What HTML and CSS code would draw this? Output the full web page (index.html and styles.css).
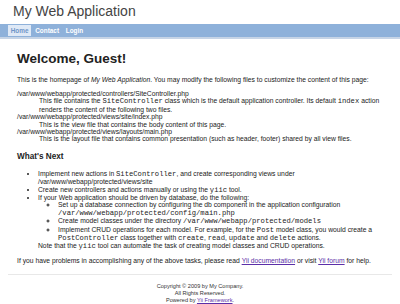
FILE: index.html
```html
<!DOCTYPE html>
<html lang="en">
<head>
    <meta charset="UTF-8">
    <title>My Web Application</title>
    <link rel="stylesheet" href="styles.css">
</head>
<body>
    <div class="page">
        <div class="header">
            <div class="logo">My Web Application</div>
        </div>
        <div class="mainmenu">
            <ul>
                <li class="active"><a href="#">Home</a></li>
                <li><a href="#">Contact</a></li>
                <li><a href="#">Login</a></li>
            </ul>
        </div>
        <div class="content">
            <h1>Welcome, Guest!</h1>
            <p>This is the homepage of <em>My Web Application</em>. You may modify the following files to customize the content of this page:</p>
            <dl>
                <dt>/var/www/webapp/protected/controllers/SiteController.php</dt>
                <dd>This file contains the <code>SiteController</code> class which is the default application controller. Its default <code>index</code> action renders the content of the following two files.</dd>
                <dt>/var/www/webapp/protected/views/site/index.php</dt>
                <dd>This is the view file that contains the body content of this page.</dd>
                <dt>/var/www/webapp/protected/views/layouts/main.php</dt>
                <dd>This is the layout file that contains common presentation (such as header, footer) shared by all view files.</dd>
            </dl>
            <h2>What's Next</h2>
            <ul class="next">
                <li>Implement new actions in <code>SiteController</code>, and create corresponding views under /var/www/webapp/protected/views/site</li>
                <li>Create new controllers and actions manually or using the <code>yiic</code> tool.</li>
                <li>If your Web application should be driven by database, do the following:
                    <ul>
                        <li>Set up a database connection by configuring the db component in the application configuration <code>/var/www/webapp/protected/config/main.php</code></li>
                        <li>Create model classes under the directory <code>/var/www/webapp/protected/models</code></li>
                        <li>Implement CRUD operations for each model. For example, for the <code>Post</code> model class, you would create a <code>PostController</code> class together with <code>create</code>, <code>read</code>, <code>update</code> and <code>delete</code> actions.</li>
                    </ul>
                    Note that the <code>yiic</code> tool can automate the task of creating model classes and CRUD operations.
                </li>
            </ul>
            <p class="help">If you have problems in accomplishing any of the above tasks, please read <a href="#">Yii documentation</a> or visit <a href="#">Yii forum</a> for help.</p>
        </div>
        <div class="footer">
            Copyright &copy; 2009 by My Company.<br>
            All Rights Reserved.<br>
            Powered by <a href="#">Yii Framework</a>.
        </div>
    </div>
</body>
</html>
```

FILE: styles.css
```css
body {
    margin: 0;
    font-family: "Liberation Sans", Arial, sans-serif;
    color: #222;
    background: #fff;
}
.header {
    height: 24px;
    box-sizing: border-box;
    padding: 2.6px 0 0 13px;
}
.logo {
    font-size: 14px;
    line-height: 16px;
    color: #444;
}
.mainmenu {
    background: #8eb1da;
    border-bottom: 2px solid #c6d4e6;
    padding: 1px 0 1px 8px;
}
.mainmenu ul {
    display: flex;
    gap: 1.4px;
    margin: 0;
    padding: 0;
    list-style: none;
}
.mainmenu a {
    display: block;
    height: 11px;
    line-height: 11px;
    padding: 0 2.7px;
    font-size: 6.4px;
    font-weight: bold;
    color: #fff;
    text-decoration: none;
}
.mainmenu .active a {
    background: #dfe9f6;
    color: #6f95c8;
}
.content {
    padding: 12px 12px 0 17px;
    font-size: 6.75px;
    line-height: 7.4px;
}
h1 {
    margin: 0 0 10px;
    font-size: 13.5px;
    line-height: 15px;
    color: #222;
}
p {
    margin: 0;
}
dl {
    margin: 6.5px 0 0;
}
dt {
    margin: 0;
}
dd {
    margin: 0 0 0 22px;
}
code {
    font-family: "Liberation Mono", "Courier New", monospace;
    font-size: 7.2px;
}
h2 {
    margin: 9.5px 0 8px;
    font-size: 8.2px;
    line-height: 9.5px;
}
.next {
    margin: 0;
    padding-left: 21px;
}
.next ul {
    margin: 0;
    padding-left: 20px;
    list-style: circle;
}
.help {
    margin-top: 6px;
}
.footer {
    margin: 10px 8px 0;
    padding-top: 8px;
    border-top: 1px solid #e8e8e8;
    text-align: center;
    font-size: 5.6px;
    line-height: 6.8px;
    color: #333;
}
a {
    color: #5b2fa8;
}
```
